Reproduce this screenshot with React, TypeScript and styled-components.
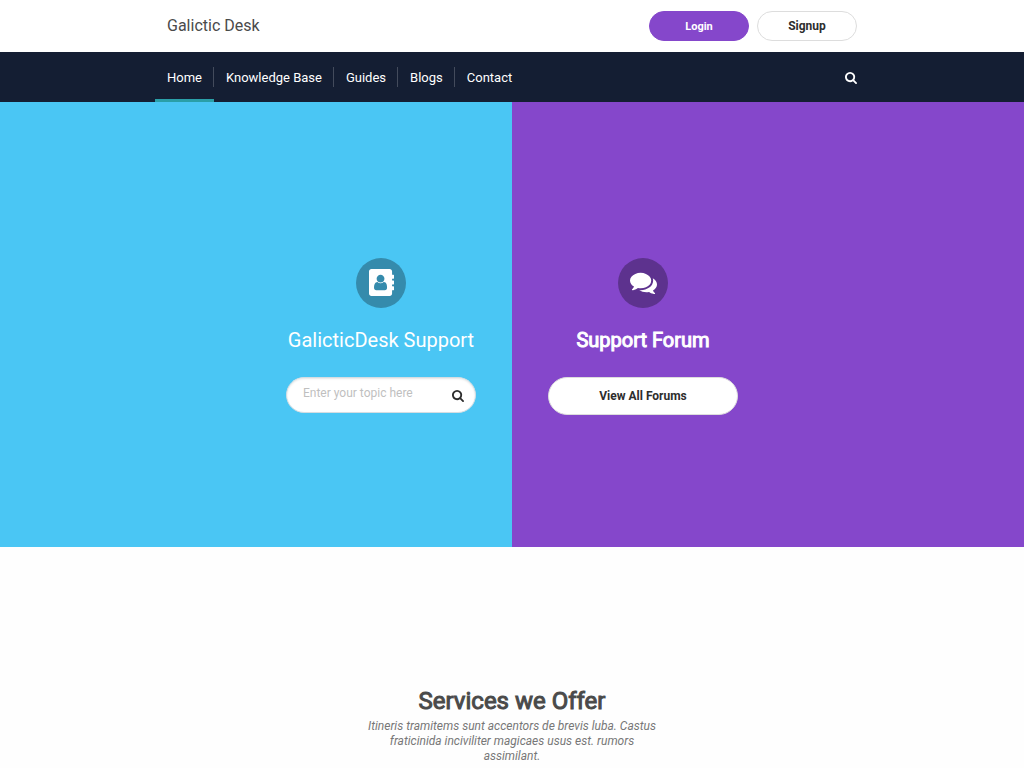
import React from "react";
import styled, { createGlobalStyle, css } from "styled-components";

const colors = {
  purple: "#8547cb",
  sky: "#4ac6f4",
  navy: "#141e33",
  teal: "#2a9fa8",
  ink: "#2d2d2d",
};

const heavyHeading = css`
  font-weight: 400;
  -webkit-text-stroke: 1px currentColor;
`;

const GlobalStyle = createGlobalStyle`
  * { box-sizing: border-box; }
  body {
    margin: 0;
    background: #fefefe;
    color: #4a4a4a;
    font-family: Roboto, "Liberation Sans", sans-serif;
    font-size: 13px;
  }
  h1, h2, p, ul { margin: 0; padding: 0; }
  button, input { font-family: inherit; }
`;

const Container = styled.div`
  width: 100%;
  max-width: 714px;
  margin: 0 auto;
  display: flex;
  align-items: center;
  justify-content: space-between;
`;

const TopBar = styled.header`
  display: flex;
  height: 52px;
  background: #fff;
`;

const Brand = styled.a`
  padding-left: 12px;
  font-size: 16px;
  line-height: 20px;
  color: #4a4a4a;
  text-decoration: none;
`;

const Actions = styled.div`
  display: flex;
  gap: 8px;
  padding-right: 12px;
`;

const PillButton = styled.button<{ $primary?: boolean }>`
  width: 100px;
  height: 30px;
  padding: 0;
  border: 1px solid ${(p) => (p.$primary ? colors.purple : "#ddd")};
  border-radius: 15px;
  background: ${(p) => (p.$primary ? colors.purple : "#fff")};
  color: ${(p) => (p.$primary ? "#fff" : colors.ink)};
  font-size: ${(p) => (p.$primary ? 11 : 12)}px;
  font-weight: 700;
  cursor: pointer;
`;

const NavBar = styled.nav`
  display: flex;
  height: 50px;
  background: ${colors.navy};
`;

const NavList = styled.ul`
  display: flex;
  list-style: none;
`;

const NavItem = styled.li<{ $active?: boolean }>`
  display: flex;
  align-items: center;
  height: 50px;
  border-bottom: 3px solid ${(p) => (p.$active ? colors.teal : "transparent")};
  border-top: 3px solid transparent;
  &:not(:last-child) a { border-right: 1px solid #434b5c; }
`;

const NavLink = styled.a`
  padding: 2px 11px 0 12px;
  font-size: 13px;
  line-height: 18px;
  color: #fff;
  text-decoration: none;
`;

const IconButton = styled.button<{ $color: string; $inset: number }>`
  display: flex;
  padding: 2px 0 0;
  margin-right: ${(p) => p.$inset}px;
  border: 0;
  background: none;
  color: ${(p) => p.$color};
  cursor: pointer;
`;

const Hero = styled.main`
  display: grid;
  grid-template-columns: 1fr 1fr;
  min-height: 445px;
`;

const Panel = styled.section<{ $bg: string; $side: "left" | "right" }>`
  display: flex;
  justify-content: ${(p) => (p.$side === "left" ? "flex-end" : "flex-start")};
  padding: 156px 36px 0;
  background: ${(p) => p.$bg};
`;

const PanelBody = styled.div`
  display: flex;
  flex-direction: column;
  align-items: center;
  width: 190px;
`;

const IconDisc = styled.span<{ $bg: string }>`
  display: flex;
  align-items: center;
  justify-content: center;
  width: 50px;
  height: 50px;
  padding-bottom: 1px;
  border-radius: 50%;
  background: ${(p) => p.$bg};
  color: #fff;
`;

const PanelTitle = styled.h2<{ $bold?: boolean }>`
  margin: 20px 0 25px;
  font-size: 20px;
  line-height: 24px;
  font-weight: 400;
  color: #fff;
  white-space: nowrap;
  ${(p) => p.$bold && heavyHeading}
`;

const SearchBox = styled.form`
  display: flex;
  align-items: center;
  width: 100%;
  height: 36px;
  border: 1px solid #d5dde2;
  border-radius: 18px;
  background: #fff;
  box-shadow: inset 0 1px 2px rgba(10, 10, 10, 0.1);
`;

const SearchInput = styled.input`
  flex: 1;
  min-width: 0;
  height: 34px;
  padding: 0 0 4px 16px;
  border: 0;
  outline: 0;
  background: none;
  font-size: 12px;
  color: ${colors.ink};
  &::placeholder { color: #bfbfbf; opacity: 1; }
`;

const ForumButton = styled.button`
  width: 100%;
  height: 38px;
  padding: 0;
  border: 1px solid #ddd;
  border-radius: 19px;
  background: #fff;
  color: ${colors.ink};
  font-size: 12px;
  font-weight: 700;
  cursor: pointer;
`;

const Services = styled.section`
  display: flex;
  flex-direction: column;
  align-items: center;
  padding-top: 137px;
  text-align: center;
`;

const ServicesTitle = styled.h1`
  font-size: 24px;
  line-height: 34px;
  color: #4a4a4a;
  ${heavyHeading}
`;

const ServicesText = styled.p`
  max-width: 302px;
  padding-top: 1px;
  font-size: 12px;
  line-height: 15px;
  font-style: italic;
  color: #777;
`;

const SearchIcon = ({ size }: { size: number }) => (
  <svg width={size} height={size} viewBox="64 128 1664 1664" fill="currentColor" aria-hidden="true">
    <path d="M1216 832q0-185-131.5-316.5t-316.5-131.5-316.5 131.5-131.5 316.5 131.5 316.5 316.5 131.5 316.5-131.5 131.5-316.5zm512 832q0 52-38 90t-90 38q-54 0-90-38l-343-342q-179 124-399 124-143 0-273.5-55.5t-225-150-150-225-55.5-273.5 55.5-273.5 150-225 225-150 273.5-55.5 273.5 55.5 225 150 150 225 55.5 273.5q0 220-124 399l343 343q37 37 37 90z" />
  </svg>
);

const AddressBookIcon = () => (
  <svg width="25" height="27" viewBox="0 0 1664 1792" fill="currentColor" fillRule="evenodd" aria-hidden="true">
    <path d="M1028 644q0 107-76.5 183t-183.5 76-183.5-76-76.5-183q0-108 76.5-184t183.5-76 183.5 76 76.5 184zm-48 220q46 0 82.5 17t60 47.5 39.5 67 24 81 11.5 82.5 3.5 79q0 67-39.5 118.5t-105.5 51.5h-576q-66 0-105.5-51.5t-39.5-118.5q0-48 4.5-93.5t18.5-98.5 36.5-91.5 63-64.5 93.5-26h5q7 4 32 19.5t35.5 21 33 17 37 16 35 9 39.5 4.5 39.5-4.5 35-9 37-16 33-17 35.5-21 32-19.5zm684-256q0 13-9.5 22.5t-22.5 9.5h-96v128h96q13 0 22.5 9.5t9.5 22.5v192q0 13-9.5 22.5t-22.5 9.5h-96v128h96q13 0 22.5 9.5t9.5 22.5v192q0 13-9.5 22.5t-22.5 9.5h-96v224q0 66-47 113t-113 47h-1216q-66 0-113-47t-47-113v-1472q0-66 47-113t113-47h1216q66 0 113 47t47 113v224h96q13 0 22.5 9.5t9.5 22.5v192z" />
  </svg>
);

const CommentsIcon = () => (
  <svg width="27" height="27" viewBox="0 0 1792 1792" fill="currentColor" aria-hidden="true">
    <path d="M1408 768q0 139-94 257t-256.5 186.5-353.5 68.5q-86 0-176-16-124 88-278 128-36 9-86 16h-3q-11 0-20.5-8t-11.5-21q-1-3-1-6.5t.5-6.5 2-6l2.5-5 3.5-5.5 4-5 4.5-5 4-4.5q5-6 23-25t26-29.5 22.5-29 25-38.5 20.5-44q-124-72-195-177t-71-224q0-139 94-257t256.5-186.5 353.5-68.5 353.5 68.5 256.5 186.5 94 257zm384 256q0 120-71 224.5t-195 176.5q10 24 20.5 44t25 38.5 22.5 29 26 29.5 23 25q1 1 4 4.5t4.5 5 4 5 3.5 5.5l2.5 5 2 6 .5 6.5-1 6.5q-3 14-13 22t-22 7q-50-7-86-16-154-40-278-128-90 16-176 16-271 0-472-132 58 4 88 4 161 0 309-45t264-129q125-92 192-212t67-254q0-77-23-152 129 71 204 178t75 230z" />
  </svg>
);

const links = ["Home", "Knowledge Base", "Guides", "Blogs", "Contact"];

export default function App() {
  return (
    <>
      <GlobalStyle />
      <TopBar>
        <Container>
          <Brand href="#">Galictic Desk</Brand>
          <Actions>
            <PillButton type="button" $primary>Login</PillButton>
            <PillButton type="button">Signup</PillButton>
          </Actions>
        </Container>
      </TopBar>
      <NavBar>
        <Container>
          <NavList>
            {links.map((label, i) => (
              <NavItem key={label} $active={i === 0}>
                <NavLink href="#">{label}</NavLink>
              </NavItem>
            ))}
          </NavList>
          <IconButton type="button" aria-label="Search" $color="#fff" $inset={12}>
            <SearchIcon size={12} />
          </IconButton>
        </Container>
      </NavBar>
      <Hero>
        <Panel $bg={colors.sky} $side="left">
          <PanelBody>
            <IconDisc $bg="#358bac"><AddressBookIcon /></IconDisc>
            <PanelTitle>GalicticDesk Support</PanelTitle>
            <SearchBox onSubmit={(e) => e.preventDefault()}>
              <SearchInput type="text" aria-label="Topic" placeholder="Enter your topic here" />
              <IconButton type="submit" aria-label="Search topics" $color={colors.ink} $inset={11}>
                <SearchIcon size={12} />
              </IconButton>
            </SearchBox>
          </PanelBody>
        </Panel>
        <Panel $bg={colors.purple} $side="right">
          <PanelBody>
            <IconDisc $bg="#5d328e"><CommentsIcon /></IconDisc>
            <PanelTitle $bold>Support Forum</PanelTitle>
            <ForumButton type="button">View All Forums</ForumButton>
          </PanelBody>
        </Panel>
      </Hero>
      <Services>
        <ServicesTitle>Services we Offer</ServicesTitle>
        <ServicesText>
          Itineris tramitems sunt accentors de brevis luba. Castus fraticinida inciviliter magicaes usus est. rumors assimilant.
        </ServicesText>
      </Services>
    </>
  );
}
